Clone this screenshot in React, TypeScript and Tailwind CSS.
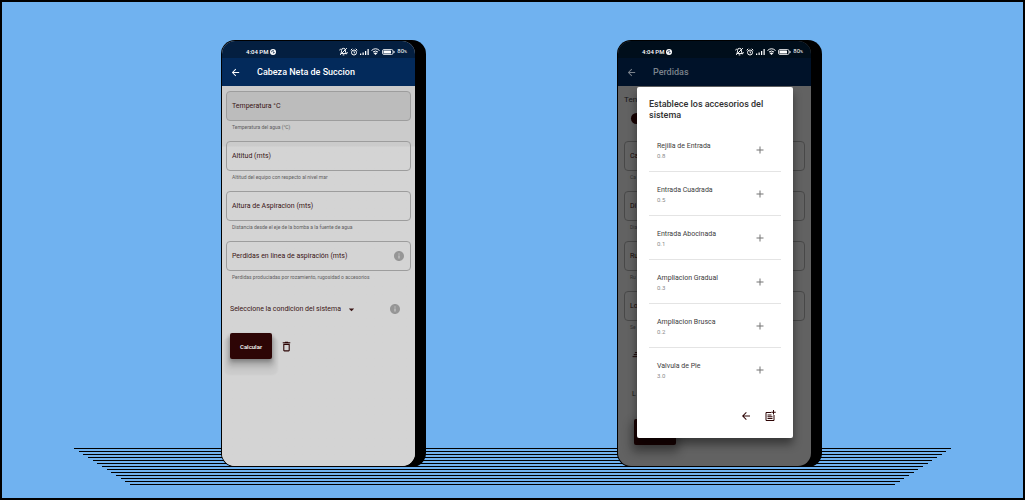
import React from "react";
import { MdAdd, MdArrowBack, MdArrowDropDown, MdDeleteOutline, MdInfo } from "react-icons/md";

function StatusBar({ dim = false }: { dim?: boolean }) {
  return (
    <div
      className={`flex h-[17px] shrink-0 items-center justify-between pl-6 pr-2 pt-1 text-[6px] leading-[8px] text-white ${
        dim ? "bg-[#000e1b]" : "bg-[#041f40]"
      }`}
    >
      <span className="flex items-center gap-0.5 font-medium">
        4:04 PM
        <svg viewBox="0 0 12 12" className="size-[6px]" aria-hidden="true">
          <circle cx="6" cy="6" r="6" fill="#fff" />
          <path d="M3.5 6.5V4.5Q3.5 3.5 4.5 3.5H8M6 6.5h2.6L6.5 9" fill="none" stroke="#041f40" strokeWidth="1.6" />
        </svg>
      </span>
      <span className="flex items-center gap-0.5">
        <svg viewBox="0 0 16 16" className="size-[9px]" fill="none" stroke="#fff" strokeWidth="1.7" aria-hidden="true">
          <path d="M3 11.5h10L11.6 9V6a3.6 3.6 0 0 0-7.2 0v3zM6.5 14h3M2 14 14 2M1 6l2-3M15 9l-2 4" />
        </svg>
        <svg viewBox="0 0 16 16" className="size-2" fill="none" stroke="#fff" strokeWidth="2" aria-hidden="true">
          <circle cx="8" cy="9" r="5" />
          <path d="M8 6.5V9l2 1M1.5 4.5l3-3M14.5 4.5l-3-3" />
        </svg>
        <svg viewBox="0 0 18 12" className="h-[6px] w-[9px]" fill="#fff" aria-hidden="true">
          <path d="M0 9h2.5v3H0zM5 7h2.5v5H5zM10 4h2.5v8H10zM15 0h2.5v12H15z" />
        </svg>
        <svg viewBox="0 0 18 14" className="h-[7px] w-[9px]" fill="none" stroke="#fff" strokeWidth="2" aria-hidden="true">
          <path d="M1 5q8-7 16 0M4 8q5-4 10 0" />
          <path d="m9 14-4-4q4-2 8 0z" fill="#fff" stroke="none" />
        </svg>
        <svg viewBox="0 0 26 12" className="h-[6px] w-[13px]" aria-hidden="true">
          <rect x="1" y="1" width="21" height="10" rx="3" fill="none" stroke="#fff" strokeWidth="1.6" />
          <rect x="3" y="3" width="15" height="6" rx="1" fill="#fff" />
          <path d="M24 4v4" stroke="#fff" strokeWidth="2" />
        </svg>
        <span>
          80<span className="text-[4px]">%</span>
        </span>
      </span>
    </div>
  );
}

function AppBar({ title, dim = false }: { title: string; dim?: boolean }) {
  return (
    <header
      className={`flex h-7 shrink-0 items-center gap-4 pl-2 ${
        dim ? "bg-[#001229] text-[#7a828c]" : "bg-[#032a5b] text-white"
      }`}
    >
      <button type="button" aria-label="Volver">
        <MdArrowBack className="size-[11px]" />
      </button>
      <h1 className="text-[9px] leading-3 font-medium">{title}</h1>
    </header>
  );
}

function Phone({ dim = false, title, children }: { dim?: boolean; title: string; children: React.ReactNode }) {
  return (
    <section className="relative h-[427px] w-[205px] shrink-0 rounded-[14px] bg-black py-px pr-[11px] pl-px">
      <div className={`relative flex h-full flex-col overflow-hidden rounded-[13px] ${dim ? "bg-[#626262]" : "bg-[#d4d4d4]"}`}>
        <StatusBar dim={dim} />
        <AppBar title={title} dim={dim} />
        {children}
      </div>
    </section>
  );
}

type FieldProps = { id: string; label: string; help: string; info?: boolean; active?: boolean; dim?: boolean };

function Field({ id, label, help, info, active, dim }: FieldProps) {
  return (
    <div className="h-[50px]">
      <div
        className={`flex h-[30px] items-center gap-1 rounded-[4px] border px-[5px] ${
          dim ? "border-[#484848]" : "border-[#9d9d9d]"
        } ${active ? "bg-[#bcbcbc]" : ""}`}
      >
        <label htmlFor={id} className={`text-[7px] leading-[10px] whitespace-nowrap ${dim ? "text-[#160808]" : "text-[#3a1414]"}`}>
          {label}
        </label>
        <input id={id} type="text" aria-describedby={`${id}-help`} className="w-0 min-w-0 flex-1 bg-transparent text-[7px] outline-none" />
        {info && <InfoButton />}
      </div>
      <p
        id={`${id}-help`}
        className={`mt-[3px] px-1.5 text-[5px] leading-[7px] whitespace-nowrap ${dim ? "text-[#303030]" : "text-[#606060]"}`}
      >
        {help}
      </p>
    </div>
  );
}

function InfoButton() {
  return (
    <button type="button" aria-label="Información" className="text-[#969696]">
      <MdInfo className="size-3" />
    </button>
  );
}

function SuctionScreen() {
  return (
    <Phone title="Cabeza Neta de Succion">
      <form className="flex flex-1 flex-col bg-linear-to-b from-[#cbcbcb] from-[60px] to-[#d4d4d4] to-[61px] px-1 pt-[5px]">
        <Field id="temperatura" label="Temperatura °C" help="Temperatura del agua (°C)" active />
        <Field id="altitud" label="Altitud (mts)" help="Altitud del equipo con respecto al nivel mar" />
        <Field id="altura" label="Altura de Aspiracion (mts)" help="Distancia desde el eje de la bomba a la fuente de agua" />
        <Field id="perdidas" label="Perdidas en linea de aspiración (mts)" help="Perdidas produciadas por rozamiento, rugosidad o accesorios" info />
        <div className="mt-3 flex h-3 items-center justify-between pr-[10px] pl-1">
          <div className="flex items-center gap-1 text-[#3a1414]">
            <select aria-label="Condicion del sistema" className="field-sizing-content appearance-none bg-transparent text-[7px] leading-[10px]">
              <option>Seleccione la condicion del sistema</option>
            </select>
            <MdArrowDropDown className="size-[13px]" />
          </div>
          <InfoButton />
        </div>
        <div className="mt-[18px] flex items-center gap-2 pl-1">
          <button
            type="button"
            className="h-[26px] w-[42px] rounded-[2px] bg-[#2d0505] text-[6px] font-medium text-white shadow-[0_3px_4px_rgba(0,0,0,0.3),0_6px_4px_3px_rgba(0,0,0,0.1),0_10px_2px_6px_rgba(0,0,0,0.04)]"
          >
            Calcular
          </button>
          <button type="button" aria-label="Borrar" className="text-[#2d0505]">
            <MdDeleteOutline className="size-[13px]" />
          </button>
        </div>
      </form>
    </Phone>
  );
}

const accessories = [
  { name: "Rejilla de Entrada", value: "0.8" },
  { name: "Entrada Cuadrada", value: "0.5" },
  { name: "Entrada Abocinada", value: "0.1" },
  { name: "Ampliacion Gradual", value: "0.3" },
  { name: "Ampliacion Brusca", value: "0.2" },
  { name: "Valvula de Pie", value: "3.0" },
];

function AccessoryDialog() {
  return (
    <div
      role="dialog"
      aria-labelledby="dialog-title"
      className="absolute top-[46px] right-[18px] left-[19px] rounded-[2px] bg-white px-3 pb-4 shadow-[0_6px_10px_rgba(0,0,0,0.45)]"
    >
      <h2 id="dialog-title" className="pt-3 text-[9px] leading-[11px] font-medium text-[#303030]">
        Establece los accesorios del sistema
      </h2>
      <ul className="mt-[7px] divide-y divide-[#e4e4e4]">
        {accessories.map((item) => (
          <li key={item.name} className="flex h-11 items-center justify-between pr-[15px] pl-2">
            <div className="pt-0.5">
              <p className="text-[7px] leading-[10px] text-[#3c3c3c]">{item.name}</p>
              <p className="text-[6px] leading-[10px] text-[#8a8a8a]">{item.value}</p>
            </div>
            <button type="button" aria-label={`Agregar ${item.name}`} className="text-[#757575]">
              <MdAdd className="size-3" />
            </button>
          </li>
        ))}
      </ul>
      <div className="mt-[18px] flex items-center justify-end gap-3 pr-[5px] text-[#2d0505]">
        <button type="button" aria-label="Regresar">
          <MdArrowBack className="size-3" />
        </button>
        <button type="button" aria-label="Crear accesorio">
          <svg viewBox="0 0 24 24" className="size-3" fill="none" stroke="currentColor" strokeWidth="2" aria-hidden="true">
            <path d="M14 5H4v16h16V10M7 10h8M7 13.5h10M7 17h10" />
            <path d="M19 0v9M14.5 4.5h9" />
          </svg>
        </button>
      </div>
    </div>
  );
}

function LossesScreen() {
  return (
    <Phone title="Perdidas" dim>
      <div className="flex flex-1 flex-col px-1.5 pt-[9px]">
        <p className="text-[8px] leading-[10px] text-[#161616]">Ten</p>
        <div className="mt-2 ml-[7px] size-[11px] rounded-full bg-[#170202]" />
        <div className="mt-[17px]">
          <Field id="caudal" label="Ca" help="Ca" dim />
          <Field id="diametro" label="Di" help="Dia" dim />
          <Field id="rugosidad" label="Ru" help="Ru" dim />
          <Field id="longitud" label="Lo" help="Se" dim />
        </div>
        <svg viewBox="0 0 14 12" className="mt-[11px] ml-2 h-[7px] w-2" aria-hidden="true">
          <path d="M5 1h9M3 4.5h11M1 8h13" stroke="#170202" strokeWidth="1.7" />
        </svg>
        <p className="mt-[30px] px-2 text-[7px] leading-[10px] text-[#161616]">L</p>
        <div className="mt-5 ml-[10px] h-[26px] w-[42px] rounded-[2px] bg-[#170202] shadow-[0_5px_10px_3px_rgba(0,0,0,0.3)]" />
      </div>
      <AccessoryDialog />
    </Phone>
  );
}

const floorLines = Array.from({ length: 13 }, (_, i) => ({
  y: i * 3,
  inset: Math.round((i * 56) / 12),
}));

export default function App() {
  return (
    <main className="relative flex min-h-screen items-start justify-center gap-[191px] border-2 border-black bg-[#70b2f0] pt-[38px] pl-[18px] font-['Roboto',sans-serif]">
      <svg className="absolute inset-x-0 bottom-[13px] mx-auto h-[37px] w-[877px]" viewBox="0 0 877 37" shapeRendering="crispEdges" aria-hidden="true">
        {floorLines.map((line) => (
          <rect key={line.y} x={line.inset} y={line.y} width={877 - line.inset * 2} height="1" />
        ))}
      </svg>
      <SuctionScreen />
      <LossesScreen />
    </main>
  );
}
